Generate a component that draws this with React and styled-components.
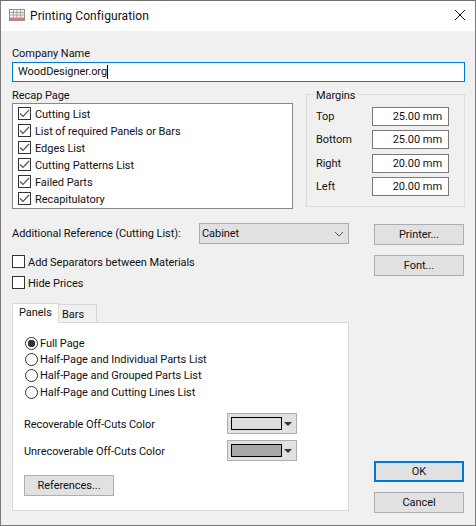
import styled, { createGlobalStyle } from "styled-components";

const recapItems = [
  "Cutting List",
  "List of required Panels or Bars",
  "Edges List",
  "Cutting Patterns List",
  "Failed Parts",
  "Recapitulatory",
];

const marginItems = [
  { label: "Top", value: "25.00 mm" },
  { label: "Bottom", value: "25.00 mm" },
  { label: "Right", value: "20.00 mm" },
  { label: "Left", value: "20.00 mm" },
];

const pageItems = [
  "Full Page",
  "Half-Page and Individual Parts List",
  "Half-Page and Grouped Parts List",
  "Half-Page and Cutting Lines List",
];

function AppIcon() {
  return (
    <svg width="16" height="12" viewBox="0 0 16 12">
      <rect x="0.5" y="0.5" width="15" height="11" fill="#fbf3f3" stroke="#7f9f8a" />
      <path d="M1 3.5h14M1 6h14M4.5 1v7M8 1v7M11.5 1v7" stroke="#a3a3a3" strokeWidth="1" />
      <rect x="1" y="8.5" width="14" height="3" fill="#e0787a" />
    </svg>
  );
}

function CheckMark() {
  return (
    <svg width="11" height="11" viewBox="0 0 11 11">
      <path d="M1 5.5 L4 8.5 L10 2" fill="none" stroke="#555" strokeWidth="1.2" />
    </svg>
  );
}

export default function App() {
  return (
    <>
      <GlobalStyle />
      <Window>
        <TitleBar>
          <AppIcon />
          <Title>Printing Configuration</Title>
          <svg width="10" height="10" viewBox="0 0 10 10">
            <path d="M0 0 L10 10 M10 0 L0 10" stroke="#111" strokeWidth="1" />
          </svg>
        </TitleBar>

        <Body>
          <Label>Company Name</Label>
          <CompanyInput>
            WoodDesigner.org<Caret />
          </CompanyInput>

          <TopRow>
            <div>
              <RecapLabel>Recap Page</RecapLabel>
              <RecapList>
                {recapItems.map((item) => (
                  <RecapRow key={item}>
                    <CheckBox>
                      <CheckMark />
                    </CheckBox>
                    <RowText>{item}</RowText>
                  </RecapRow>
                ))}
              </RecapList>
            </div>

            <MarginsGroup>
              <GroupTitle>Margins</GroupTitle>
              {marginItems.map((m) => (
                <MarginRow key={m.label}>
                  <span>{m.label}</span>
                  <NumberBox>{m.value}</NumberBox>
                </MarginRow>
              ))}
            </MarginsGroup>
          </TopRow>

          <LowerGrid>
            <LeftColumn>
              <ReferenceRow>
                <span>Additional Reference (Cutting List):</span>
                <Select>
                  Cabinet
                  <svg width="10" height="6" viewBox="0 0 10 6">
                    <path d="M1 1 L5 5 L9 1" fill="none" stroke="#555" strokeWidth="1" />
                  </svg>
                </Select>
              </ReferenceRow>

              <OptionRow>
                <CheckBox />
                <RowText>Add Separators between Materials</RowText>
              </OptionRow>
              <OptionRow>
                <CheckBox />
                <RowText>Hide Prices</RowText>
              </OptionRow>

              <TabStrip>
                <Tab $active>Panels</Tab>
                <Tab>Bars</Tab>
              </TabStrip>
              <TabPanel>
                <RadioList>
                  {pageItems.map((item, i) => (
                    <RadioRow key={item}>
                      <Radio $checked={i === 0} />
                      {item}
                    </RadioRow>
                  ))}
                </RadioList>

                <ColorRow>
                  <RowText>Recoverable Off-Cuts Color</RowText>
                  <ColorButton>
                    <Swatch $color="#dddddd" />
                    <Arrow />
                  </ColorButton>
                </ColorRow>
                <ColorRow>
                  <RowText>Unrecoverable Off-Cuts Color</RowText>
                  <ColorButton>
                    <Swatch $color="#a9a9a9" />
                    <Arrow />
                  </ColorButton>
                </ColorRow>

                <ReferencesButton>References...</ReferencesButton>
              </TabPanel>
            </LeftColumn>

            <RightColumn>
              <ButtonStack>
                <Button>Printer...</Button>
                <Button>Font...</Button>
              </ButtonStack>
              <ButtonStack>
                <Button $primary>OK</Button>
                <Button>Cancel</Button>
              </ButtonStack>
            </RightColumn>
          </LowerGrid>
        </Body>
      </Window>
    </>
  );
}

const GlobalStyle = createGlobalStyle`
  html, body {
    margin: 0;
    padding: 0;
    background: #f0f0f0;
  }

  * {
    box-sizing: border-box;
  }

  body {
    font-family: Roboto, "Noto Sans", sans-serif;
    font-size: 11px;
    letter-spacing: -0.05px;
    color: #111;
  }
`;

const Window = styled.div`
  width: 476px;
  height: 526px;
  border: 1px solid #7a7a7a;
  border-top-color: #6e6e6e;
  background: #f0f0f0;
  display: flex;
  flex-direction: column;
`;

const TitleBar = styled.div`
  height: 30px;
  flex-shrink: 0;
  background: #fff;
  display: flex;
  align-items: center;
  padding: 0 10px 0 8px;
  gap: 5px;

  svg {
    flex-shrink: 0;
    margin-bottom: 2px;
  }
`;

const Title = styled.div`
  flex: 1;
  font-size: 12px;
  letter-spacing: 0.1px;
`;

const Body = styled.div`
  flex: 1;
  padding: 15px 10px 0 11px;
  display: flex;
  flex-direction: column;
`;

const Label = styled.div`
  height: 16px;
  line-height: 15px;
`;

const RecapLabel = styled(Label)`
  line-height: 17px;
`;

const RowText = styled.span`
  padding-top: 2px;
`;

const CompanyInput = styled.div`
  height: 20px;
  width: 100%;
  background: #fff;
  border: 1px solid #0078d7;
  line-height: 18px;
  padding-left: 5px;
  display: flex;
  align-items: center;
`;

const Caret = styled.span`
  width: 1px;
  height: 14px;
  background: #000;
`;

const TopRow = styled.div`
  display: flex;
  justify-content: space-between;
  margin-top: 5px;
`;

const RecapList = styled.div`
  width: 281px;
  height: 106px;
  background: #fff;
  border: 1px solid #828790;
  padding: 1px 0 0 5px;
`;

const RecapRow = styled.div`
  height: 17px;
  display: flex;
  align-items: center;
  gap: 4px;
  white-space: nowrap;
`;

const CheckBox = styled.span`
  width: 13px;
  height: 13px;
  flex-shrink: 0;
  border: 1px solid #333;
  background: #fff;
  display: inline-flex;
  align-items: center;
  justify-content: center;
`;

const MarginsGroup = styled.div`
  position: relative;
  width: 159px;
  height: 113px;
  margin-top: 7px;
  border: 1px solid #dcdcdc;
  padding: 12px 15px 0 9px;
  display: flex;
  flex-direction: column;
  gap: 4.3px;
`;

const GroupTitle = styled.span`
  position: absolute;
  top: -8px;
  left: 7px;
  padding: 0 2px;
  background: #f0f0f0;
  line-height: 17px;
`;

const MarginRow = styled.div`
  height: 19px;
  display: flex;
  align-items: center;
  justify-content: space-between;
`;

const NumberBox = styled.div`
  width: 77px;
  height: 19px;
  background: #fff;
  border: 1px solid #7a7a7a;
  text-align: right;
  line-height: 17px;
  padding-right: 6px;
`;

const LowerGrid = styled.div`
  flex: 1;
  display: grid;
  grid-template-columns: 337px 90px;
  column-gap: 25px;
  margin-top: 14px;
`;

const LeftColumn = styled.div`
  display: flex;
  flex-direction: column;
`;

const ReferenceRow = styled.div`
  display: flex;
  align-items: center;
  justify-content: space-between;
  height: 21px;
  margin-bottom: 11px;
`;

const Select = styled.div`
  width: 150px;
  height: 21px;
  background: #e1e1e1;
  border: 1px solid #adadad;
  display: flex;
  align-items: center;
  justify-content: space-between;
  padding: 0 4px 0 2px;
`;

const OptionRow = styled.div`
  height: 13px;
  margin-bottom: 8px;
  display: flex;
  align-items: center;
  gap: 3px;
  white-space: nowrap;
`;

const TabStrip = styled.div`
  display: flex;
  align-items: flex-end;
  height: 20px;
  margin-top: 6px;
  position: relative;
  z-index: 1;
`;

const Tab = styled.div`
  background: ${(p) => (p.$active ? "#fff" : "#f0f0f0")};
  border: 1px solid #d9d9d9;
  border-bottom: ${(p) => (p.$active ? "none" : "1px solid #d9d9d9")};
  border-left: ${(p) => (p.$active ? "1px solid #d9d9d9" : "none")};
  height: ${(p) => (p.$active ? "20px" : "19px")};
  width: ${(p) => (p.$active ? "47px" : "38px")};
  padding: 0 0 0 ${(p) => (p.$active ? "6px" : "3px")};
  line-height: ${(p) => (p.$active ? "17px" : "19px")};
`;

const TabPanel = styled.div`
  width: 337px;
  height: 189px;
  margin-top: -1px;
  background: #fff;
  border: 1px solid #d9d9d9;
  padding: 12px 11px 0 11px;
`;

const RadioList = styled.div`
  display: flex;
  flex-direction: column;
  padding-left: 1px;
  margin-bottom: 13px;
`;

const RadioRow = styled.div`
  height: 16.3px;
  display: flex;
  align-items: center;
  gap: 2px;
  white-space: nowrap;
`;

const Radio = styled.span`
  width: 13px;
  height: 13px;
  flex-shrink: 0;
  border-radius: 50%;
  border: 1px solid #333;
  background: ${(p) =>
    p.$checked ? "radial-gradient(circle, #333 0 3.5px, #fff 4px)" : "#fff"};
`;

const ColorRow = styled.div`
  height: 21px;
  margin-bottom: 6px;
  display: flex;
  align-items: center;
  justify-content: space-between;
  padding-right: 40px;
`;

const ColorButton = styled.div`
  width: 70px;
  height: 21px;
  background: #e1e1e1;
  border: 1px solid #adadad;
  display: flex;
  align-items: center;
  padding: 0 4px 0 3px;
  justify-content: space-between;
`;

const Swatch = styled.span`
  width: 51px;
  height: 13px;
  background: ${(p) => p.$color};
  border: 1px solid #000;
`;

const Arrow = styled.span`
  width: 0;
  height: 0;
  border-left: 4px solid transparent;
  border-right: 4px solid transparent;
  border-top: 4px solid #333;
`;

const Button = styled.div`
  width: 90px;
  height: 21px;
  background: #e1e1e1;
  border: ${(p) => (p.$primary ? "2px solid #0078d7" : "1px solid #adadad")};
  display: flex;
  align-items: center;
  justify-content: center;
`;

const ReferencesButton = styled(Button)`
  margin-top: 14px;
`;

const RightColumn = styled.div`
  display: flex;
  flex-direction: column;
  justify-content: space-between;
  padding-bottom: 12px;
`;

const ButtonStack = styled.div`
  display: flex;
  flex-direction: column;
  gap: 10px;
  margin-top: 1px;
`;
